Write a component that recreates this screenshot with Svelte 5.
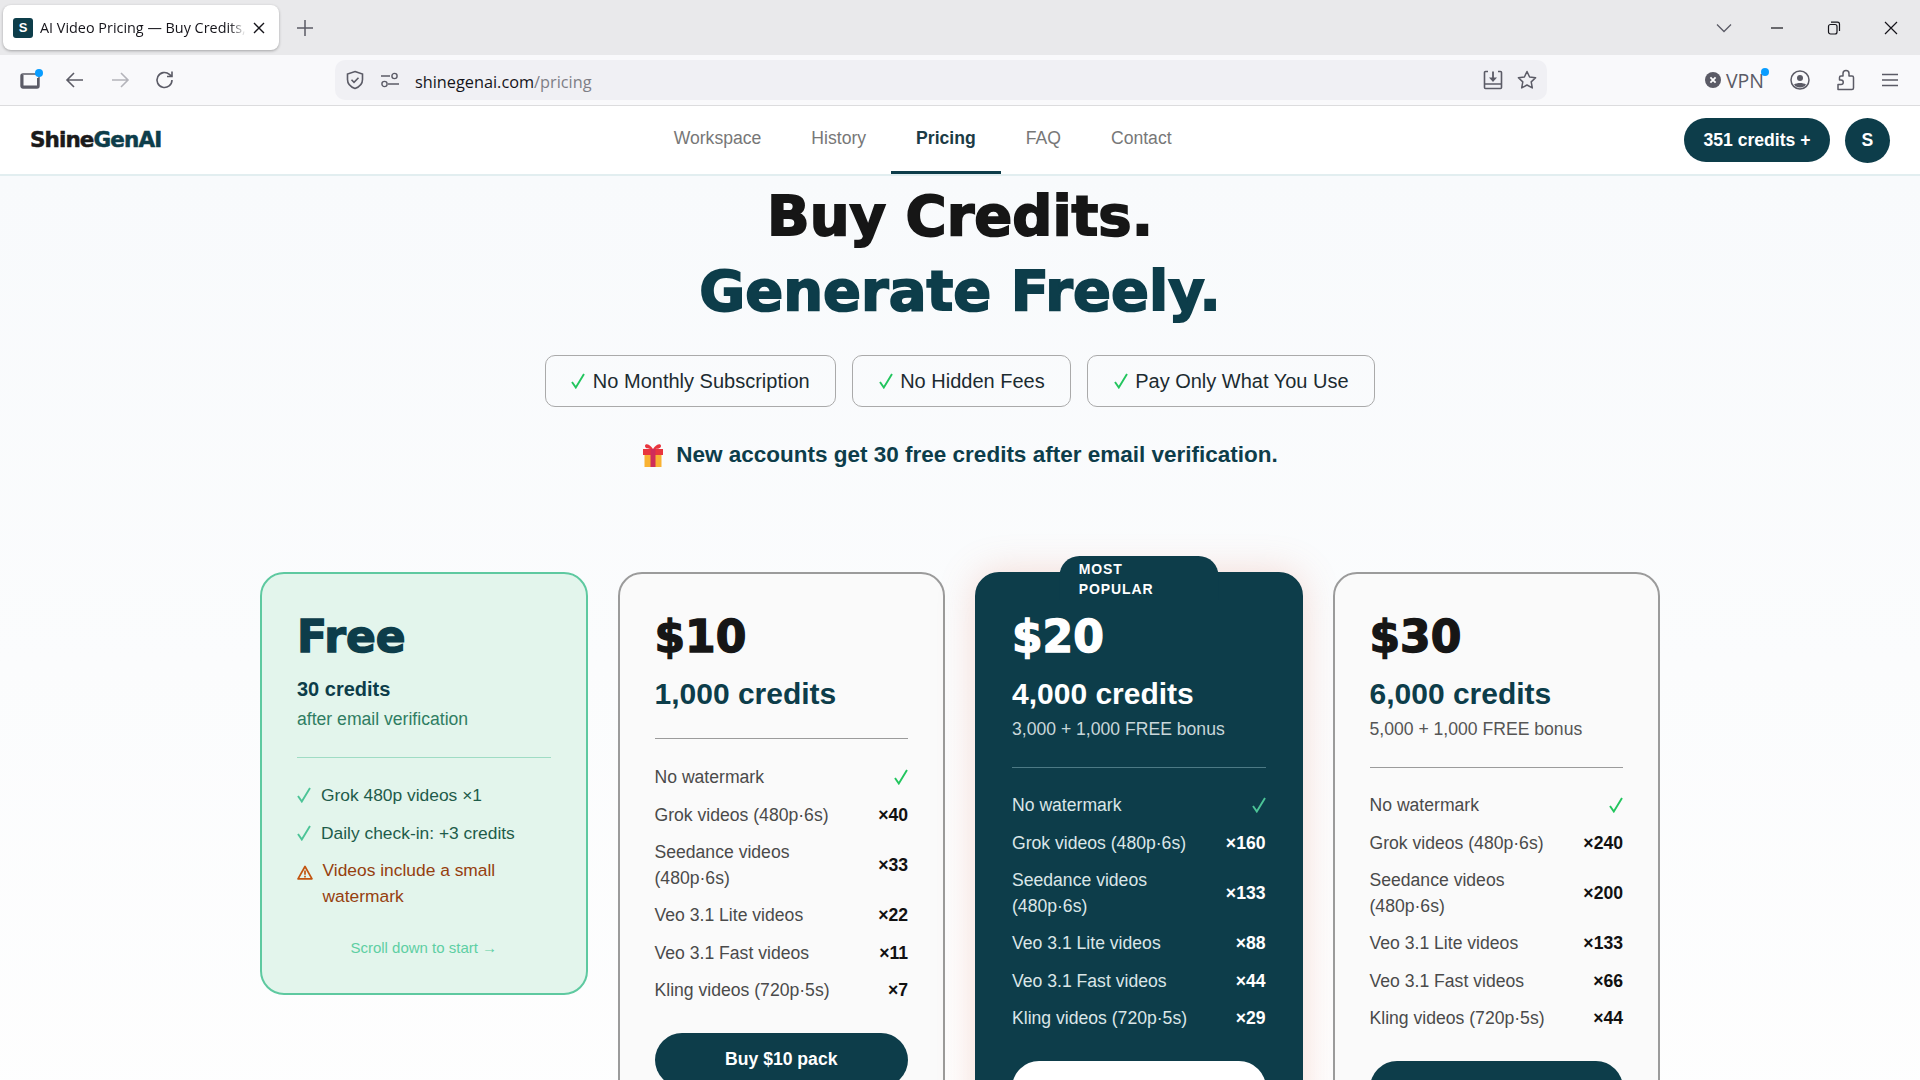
<script>
  const links = ['Workspace', 'History', 'Pricing', 'FAQ', 'Contact'];
  const perks = ['No Monthly Subscription', 'No Hidden Fees', 'Pay Only What You Use'];
  const plans = [
    { price: '$10', credits: '1,000 credits', rates: ['×40', '×33', '×22', '×11', '×7'] },
    { price: '$20', credits: '4,000 credits', bonus: '3,000 + 1,000 FREE bonus', popular: true, rates: ['×160', '×133', '×88', '×44', '×29'] },
    { price: '$30', credits: '6,000 credits', bonus: '5,000 + 1,000 FREE bonus', rates: ['×240', '×200', '×133', '×66', '×44'] }
  ];
  const models = ['Grok videos (480p·6s)', 'Seedance videos (480p·6s)', 'Veo 3.1 Lite videos', 'Veo 3.1 Fast videos', 'Kling videos (720p·5s)'];
</script>

{#snippet check()}
  <svg class="check" width="14" height="16" viewBox="0 0 14 16"><path d="M1 9l3.800 5.500L13 1" stroke="currentColor" stroke-width="1.900" fill="none"/></svg>
{/snippet}

<div class="screen">
  <div class="tabstrip">
    <div class="tab">
      <span class="favicon">S</span>
      <span class="tabtitle">AI Video Pricing — Buy Credits, Generate Freely</span>
      <svg class="tabclose" width="14" height="14" viewBox="0 0 14 14"><path d="M2 2l10 10M12 2L2 12" stroke="#15141a" stroke-width="1.4" fill="none"/></svg>
    </div>
    <svg class="newtab" width="18" height="18" viewBox="0 0 18 18"><path d="M9 1v16M1 9h16" stroke="#5b5b66" stroke-width="1.5" fill="none"/></svg>
    <div class="winbtns">
      <svg class="tablist" width="16" height="10" viewBox="0 0 16 10"><path d="M1 1.500l7 7 7-7" stroke="#5b5b66" stroke-width="1.300" fill="none"/></svg>
      <svg width="14" height="2" viewBox="0 0 14 2"><path d="M1 1h12" stroke="#15141a" stroke-width="1.200"/></svg>
      <svg width="14" height="14" viewBox="0 0 14 14"><rect x="1.500" y="3.500" width="8.500" height="9.500" rx="2" stroke="#15141a" stroke-width="1.200" fill="none"/><path d="M4 1.200h6.500a2 2 0 0 1 2 2V10" stroke="#15141a" stroke-width="1.200" fill="none"/></svg>
      <svg width="14" height="14" viewBox="0 0 14 14"><path d="M1 1l12 12M13 1L1 13" stroke="#15141a" stroke-width="1.200" fill="none"/></svg>
    </div>
  </div>

  <div class="toolbar">
    <div class="navbtns">
      <span class="sidebar">
        <svg width="22" height="18" viewBox="0 0 22 18"><rect x="1" y="3" width="18" height="14" rx="2" stroke="#5b5b66" stroke-width="1.400" fill="none"/><path d="M1 14.500h18V17H1zM1 4h2.500v12H1zM17 7h2v8h-2z" fill="#5b5b66"/></svg>
        <i class="dot"></i>
      </span>
      <svg width="20" height="18" viewBox="0 0 20 18"><path d="M18 9H2M9 2L2 9l7 7" stroke="#5b5b66" stroke-width="1.600" fill="none"/></svg>
      <svg width="20" height="18" viewBox="0 0 20 18"><path d="M2 9h16M11 2l7 7-7 7" stroke="#b4b4ba" stroke-width="1.600" fill="none"/></svg>
      <svg width="20" height="20" viewBox="0 0 20 20"><path d="M17 10a7.500 7.500 0 1 1-2.600-5.700L17 6.500M17 1.500v5h-5" stroke="#5b5b66" stroke-width="1.600" fill="none"/></svg>
    </div>
    <div class="urlbar">
      <svg width="20" height="20" viewBox="0 0 20 20"><path d="M10 1.500l7.500 2.600v5.400c0 4.300-3 7.400-7.500 9-4.500-1.600-7.500-4.700-7.500-9V4.100z" stroke="#5b5b66" stroke-width="1.600" fill="none"/><path d="M6.500 9.800l2.500 2.500 4.500-4.500" stroke="#5b5b66" stroke-width="1.600" fill="none"/></svg>
      <svg class="sliders" width="18" height="16" viewBox="0 0 18 16"><path d="M0 4h9M7 12h11" stroke="#5b5b66" stroke-width="1.500"/><circle cx="13.500" cy="4" r="2.600" stroke="#5b5b66" stroke-width="1.400" fill="none"/><circle cx="3.500" cy="12" r="2.600" stroke="#5b5b66" stroke-width="1.400" fill="none"/></svg>
      <span class="url">shinegenai.com<em>/pricing</em></span>
      <svg class="save" width="20" height="20" viewBox="0 0 20 20"><path d="M5 1.500H2.500a1 1 0 0 0-1 1v15a1 1 0 0 0 1 1h15a1 1 0 0 0 1-1v-15a1 1 0 0 0-1-1H15M1.500 14h17" stroke="#5b5b66" stroke-width="1.600" fill="none"/><path d="M10 1.500v8" stroke="#5b5b66" stroke-width="1.800"/><path d="M6 7.500h8L10 12z" fill="#5b5b66"/></svg>
      <svg width="20" height="20" viewBox="0 0 20 20"><path d="M10 1.500l2.600 5.500 6 .8-4.400 4.100 1.100 6L10 15l-5.300 2.900 1.100-6L1.400 7.800l6-.8z" stroke="#5b5b66" stroke-width="1.500" fill="none" stroke-linejoin="round"/></svg>
    </div>
    <div class="tools">
      <span class="vpn">
        <svg width="16" height="16" viewBox="0 0 16 16"><circle cx="8" cy="8" r="8" fill="#5b5b66"/><path d="M5.400 5.400l5.200 5.200M10.600 5.400l-5.200 5.200" stroke="#fff" stroke-width="1.800"/></svg>
        VPN<i class="dot"></i>
      </span>
      <svg width="20" height="20" viewBox="0 0 20 20"><circle cx="10" cy="10" r="9" stroke="#5b5b66" stroke-width="1.500" fill="none"/><circle cx="10" cy="8" r="3" fill="#5b5b66"/><path d="M4 14.500c3-2 9-2 12 0-1.500 2.300-3.500 3-6 3s-4.500-.7-6-3z" fill="#5b5b66"/></svg>
      <svg width="20" height="22" viewBox="0 0 20 22"><path d="M2 20.500h14a1.500 1.500 0 0 0 1.500-1.500V8.500a1.500 1.500 0 0 0-1.500-1.500h-3V4.500a3 3 0 0 0-6 0V7H5a1.500 1.500 0 0 0-1.500 1.500V11H5a2.200 2.200 0 0 1 0 4.500H2z" stroke="#5b5b66" stroke-width="1.500" fill="none" stroke-linejoin="round"/></svg>
      <svg width="16" height="14" viewBox="0 0 16 14"><path d="M0 1.500h16M0 7h16M0 12.500h16" stroke="#5b5b66" stroke-width="1.400"/></svg>
    </div>
  </div>

  <header class="sitenav">
    <div class="logo">Shine<span>GenAI</span></div>
    <nav>
      {#each links as link}
        <a class:active={link === 'Pricing'}>{link}</a>
      {/each}
    </nav>
    <div class="account">
      <button class="creditbtn">351 credits +</button>
      <button class="avatar">S</button>
    </div>
  </header>

  <main>
    <h1>Buy Credits.<br /><span>Generate Freely.</span></h1>
    <div class="perks">
      {#each perks as perk}
        <div class="perk">{@render check()}{perk}</div>
      {/each}
    </div>
    <p class="note">
      <svg width="22" height="24" viewBox="0 0 22 24"><rect x="2.500" y="9" width="17" height="15" fill="#f9b233"/><rect x="1" y="6" width="20" height="6" fill="#e8363f"/><rect x="8.500" y="6" width="5" height="18" fill="#cf2d5a"/><path d="M11 6C8 1 3 0 3 3s5 3 8 3zM11 6c3-5 8-6 8-3s-5 3-8 3z" fill="#e8363f"/></svg>
      New accounts get 30 free credits after email verification.
    </p>

    <div class="plans">
      <section class="card free">
        <h2>Free</h2>
        <div class="freecredits">30 credits</div>
        <div class="freesub">after email verification</div>
        <hr />
        <ul class="freelist">
          <li><span class="lead">{@render check()}</span>Grok 480p videos ×1</li>
          <li><span class="lead">{@render check()}</span>Daily check-in: +3 credits</li>
          <li class="warn">
            <span class="lead">
              <svg width="16" height="15" viewBox="0 0 16 15"><path d="M8 1.500L15 13.800H1z" stroke="currentColor" stroke-width="1.700" fill="none" stroke-linejoin="round"/><path d="M8 5.500v4.200M8 10.700v1.700" stroke="currentColor" stroke-width="1.700"/></svg>
            </span>
            Videos include a small watermark
          </li>
        </ul>
        <div class="scroll">Scroll down to start →</div>
      </section>

      {#each plans as plan}
        <section class="card" class:popular={plan.popular} class:plain={!plan.bonus}>
          {#if plan.popular}
            <div class="badge">MOST<br />POPULAR</div>
          {/if}
          <h2>{plan.price}</h2>
          <div class="credits">{plan.credits}</div>
          {#if plan.bonus}<div class="bonus">{plan.bonus}</div>{/if}
          <hr />
          <ul class="rates">
            <li><span>No watermark</span><b class="tick">{@render check()}</b></li>
            {#each models as model, i}
              <li><span>{model}</span><b>{plan.rates[i]}</b></li>
            {/each}
          </ul>
          <button class="buy">Buy {plan.price} pack</button>
        </section>
      {/each}
    </div>
  </main>
</div>

<style>
  :global(body) {
    margin: 0;
    background: #fff;
  }
  .screen {
    width: 1920px;
    height: 1080px;
    overflow: hidden;
    display: flex;
    flex-direction: column;
    font-family: "Liberation Sans", Arial, sans-serif;
  }

  /* browser chrome */
  .tabstrip {
    height: 55px;
    flex: none;
    background: #e9e9eb;
    display: flex;
    align-items: center;
    box-sizing: border-box;
    padding-left: 3px;
  }
  .tab {
    width: 276px;
    height: 45px;
    background: #fff;
    border-radius: 8px;
    box-shadow: 0 1px 3px rgba(0, 0, 0, 0.3);
    display: flex;
    align-items: center;
    box-sizing: border-box;
    padding: 0 13px 0 10px;
  }
  .favicon {
    width: 20px;
    height: 20px;
    flex: none;
    border-radius: 3px;
    background: #0d3d4a;
    color: #fff;
    font-size: 13px;
    font-weight: 700;
    text-align: center;
    line-height: 20px;
  }
  .tabtitle {
    flex: 1;
    min-width: 0;
    margin-left: 7px;
    font-family: "Open Sans", sans-serif;
    font-size: 14.4px;
    color: #15141a;
    white-space: nowrap;
    overflow: hidden;
    -webkit-mask-image: linear-gradient(to right, #000 92%, transparent);
    mask-image: linear-gradient(to right, #000 92%, transparent);
  }
  .tabclose {
    margin-left: 6px;
    flex: none;
  }
  .newtab {
    margin-left: 17px;
  }
  .winbtns {
    margin-left: auto;
    display: flex;
    align-items: center;
    gap: 43px;
    padding-right: 22px;
  }
  .tablist {
    margin-right: -5px;
  }
  .toolbar {
    height: 51px;
    flex: none;
    background: #f9f9fb;
    border-bottom: 1px solid #dcdcde;
    box-sizing: border-box;
    display: flex;
    align-items: center;
    padding: 0 22px 0 20px;
  }
  .navbtns {
    width: 315px;
    flex: none;
    display: flex;
    align-items: center;
    gap: 25px;
  }
  .sidebar {
    position: relative;
    display: flex;
    margin-right: -2px;
  }
  .dot {
    position: absolute;
    width: 8px;
    height: 8px;
    border-radius: 50%;
    background: #0a9dff;
    top: -2px;
    right: -1px;
  }
  .urlbar {
    width: 1212px;
    height: 40px;
    flex: none;
    background: #f0f0f4;
    border-radius: 10px;
    display: flex;
    align-items: center;
    box-sizing: border-box;
    padding: 0 10px;
  }
  .sliders {
    margin-left: 16px;
  }
  .url {
    margin-left: 16px;
    padding-top: 3px;
    font-family: "Open Sans", sans-serif;
    font-size: 16.3px;
    color: #15141a;
  }
  .url em {
    font-style: normal;
    color: #7e7e86;
  }
  .save {
    margin-left: auto;
    margin-right: 14px;
  }
  .tools {
    flex: 1;
    display: flex;
    align-items: center;
    justify-content: flex-end;
    gap: 26px;
  }
  .vpn {
    position: relative;
    display: flex;
    align-items: center;
    gap: 5px;
    font-family: "Open Sans", sans-serif;
    font-size: 19.5px;
    color: #5b5b66;
  }
  .vpn .dot {
    top: 1px;
    right: -5px;
  }

  /* site */
  .sitenav {
    height: 70px;
    flex: none;
    background: #fff;
    border-bottom: 2px solid #e2eef0;
    box-sizing: border-box;
    display: flex;
    align-items: stretch;
    justify-content: space-between;
    padding: 0 30px;
  }
  .logo {
    align-self: center;
    margin-bottom: 2px;
    font-family: "DejaVu Sans", sans-serif;
    font-weight: 700;
    font-size: 21.5px;
    letter-spacing: -0.9px;
    -webkit-text-stroke: 0.5px currentColor;
    color: #1a1a1a;
  }
  .logo span {
    color: #0d3d4a;
  }
  nav {
    display: flex;
  }
  nav a {
    display: flex;
    align-items: center;
    padding: 0 25px;
    font-size: 17.6px;
    color: #777;
    box-sizing: border-box;
    border-bottom: 3px solid transparent;
  }
  nav a.active {
    color: #1c3b45;
    font-weight: 700;
    border-bottom-color: #0d3d4a;
  }
  .account {
    display: flex;
    align-items: center;
    gap: 15px;
  }
  .creditbtn,
  .avatar {
    border: 0;
    background: #0d3d4a;
    color: #fff;
    font: 700 17.6px "Liberation Sans", sans-serif;
  }
  .creditbtn {
    width: 146px;
    height: 44px;
    border-radius: 22px;
    padding: 0;
  }
  .avatar {
    width: 45px;
    height: 45px;
    border-radius: 50%;
    padding: 0;
  }

  main {
    flex: 1;
    background: linear-gradient(#f8fafc, #fefefe);
    display: flex;
    flex-direction: column;
    align-items: center;
  }
  h1 {
    margin: 2px 0 0;
    font-family: "DejaVu Sans", sans-serif;
    font-weight: 700;
    font-size: 56px;
    line-height: 75px;
    text-align: center;
    color: #161616;
    -webkit-text-stroke: 1.8px currentColor;
  }
  h1 span {
    color: #0d3d4a;
  }
  .perks {
    display: flex;
    gap: 16px;
    margin-top: 27px;
  }
  .perk {
    height: 52px;
    box-sizing: border-box;
    border: 1px solid #aaa;
    border-radius: 10px;
    padding: 0 25.5px;
    display: flex;
    align-items: center;
    gap: 7.5px;
    font-size: 20px;
    color: #1c2b30;
  }
  .check {
    display: block;
    color: #22c55e;
    flex: none;
  }
  .note {
    margin: 33px 0 0;
    display: flex;
    align-items: center;
    gap: 12px;
    font-size: 22.5px;
    font-weight: 700;
    color: #0d3d4a;
    line-height: 30px;
  }
  .plans {
    width: 1400px;
    margin-top: 102px;
    display: grid;
    grid-template-columns: repeat(4, 1fr);
    gap: 30px;
    align-items: start;
  }
  .card {
    position: relative;
    box-sizing: border-box;
    border: 2px solid #9b9b9b;
    border-radius: 24px;
    background: #fafafa;
    padding: 36px 35px;
    color: #4a4a4a;
  }
  h2 {
    margin: 0;
    font-family: "DejaVu Sans", sans-serif;
    font-weight: 700;
    font-size: 44px;
    line-height: 53px;
    color: #161616;
    -webkit-text-stroke: 1.4px currentColor;
  }
  .credits {
    margin-top: 13px;
    font-size: 30px;
    line-height: 36px;
    font-weight: 700;
    color: #0d3d4a;
  }
  .bonus {
    margin-top: 5px;
    font-size: 17.6px;
    line-height: 24px;
    color: #555;
  }
  hr {
    border: 0;
    height: 1px;
    margin: 26px 0 25px;
    background: #9b9b9b;
  }
  .plain hr {
    margin-bottom: 26px;
  }
  ul {
    list-style: none;
    margin: 0;
    padding: 0;
    display: flex;
    flex-direction: column;
    gap: 12px;
    font-size: 17.6px;
    line-height: 25.5px;
  }
  .rates li {
    display: flex;
    align-items: center;
    justify-content: space-between;
    gap: 20px;
  }
  .rates b {
    flex: none;
    color: #111;
    font-size: 17.6px;
  }
  .rates span {
    max-width: 190px;
  }
  .rates .check {
    margin-top: -2px;
  }
  .buy {
    display: block;
    width: 100%;
    height: 54px;
    margin-top: 29px;
    border: 0;
    border-radius: 27px;
    background: #0d3d4a;
    color: #fff;
    font: 700 17.6px "Liberation Sans", sans-serif;
  }

  .free {
    background: #e3f5ec;
    border-color: #5ec9a0;
    padding-bottom: 35px;
  }
  .free h2 {
    color: #0d3d4a;
  }
  .freecredits {
    margin-top: 14px;
    font-size: 20px;
    line-height: 24px;
    font-weight: 700;
    color: #0d3d4a;
  }
  .freesub {
    margin-top: 6px;
    font-size: 17.6px;
    line-height: 24px;
    color: #2f7d62;
  }
  .free hr {
    background: #9fdcc4;
  }
  .freelist {
    font-size: 17.4px;
  }
  .freelist li {
    display: flex;
    color: #1e5c4a;
  }
  .lead {
    flex: none;
    width: 24px;
    padding-top: 4px;
  }
  .lead .check {
    color: #4cc497;
  }
  .freelist .warn {
    color: #96400f;
  }
  .freelist .warn .lead {
    width: 25.5px;
    color: #c2540f;
  }
  .scroll {
    margin-top: 29px;
    text-align: center;
    font-size: 15px;
    line-height: 20px;
    color: #5ecfa3;
  }

  .popular {
    background: #0d3d4a;
    border-color: #0d3d4a;
    box-shadow: 0 0 36px rgba(226, 120, 90, 0.25);
    color: #dbe6e8;
  }
  .popular h2,
  .popular .credits,
  .popular .rates b {
    color: #fff;
  }
  .popular .check {
    color: #4cc497;
  }
  .popular .bonus {
    color: #c9d7da;
  }
  .popular hr {
    background: #4d7a85;
  }
  .popular .buy {
    background: #fff;
    color: #0d3d4a;
  }
  .badge {
    position: absolute;
    top: -18px;
    left: 50%;
    transform: translateX(-50%);
    width: 159px;
    box-sizing: border-box;
    padding: 3px 18px 1px 19.5px;
    background: #0d3d4a;
    border-radius: 20px 20px 0 0;
    color: #fff;
    font-size: 14px;
    font-weight: 700;
    line-height: 20px;
    letter-spacing: 0.9px;
  }
</style>
